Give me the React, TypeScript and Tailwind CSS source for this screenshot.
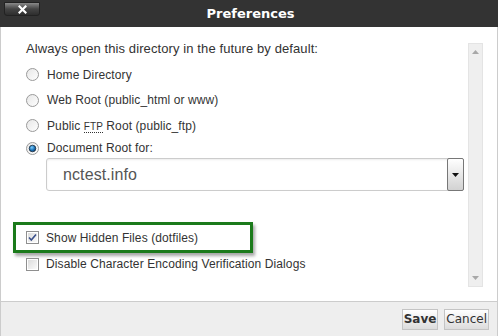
import React from 'react';

function Radio({ checked }: { checked?: boolean }) {
  return (
    <svg width="13" height="13" viewBox="0 0 13 13" className="shrink-0">
      <defs>
        <linearGradient id={checked ? 'rg1' : 'rg0'} x1="0" y1="0" x2="1" y2="1">
          <stop offset="0" stopColor="#e6e6e6" />
          <stop offset="1" stopColor="#ffffff" />
        </linearGradient>
        <radialGradient id="dot" cx="0.4" cy="0.35" r="0.7">
          <stop offset="0" stopColor="#7fd0ff" />
          <stop offset="0.6" stopColor="#1a6fb5" />
          <stop offset="1" stopColor="#0b3e6e" />
        </radialGradient>
      </defs>
      <circle cx="6.5" cy="6.5" r="6" fill={`url(#${checked ? 'rg1' : 'rg0'})`} stroke="#9a9a9a" strokeWidth="1" />
      {checked && <circle cx="6.5" cy="6.5" r="3.3" fill="url(#dot)" stroke="#1d2d3d" strokeWidth="0.8" />}
    </svg>
  );
}

function Check({ checked }: { checked?: boolean }) {
  return (
    <svg width="13" height="13" viewBox="0 0 13 13" className="shrink-0">
      <defs>
        <linearGradient id="cb" x1="0" y1="0" x2="1" y2="1">
          <stop offset="0" stopColor="#dcdcdc" />
          <stop offset="1" stopColor="#fafafa" />
        </linearGradient>
      </defs>
      <rect x="0.5" y="0.5" width="12" height="12" fill="#fff" stroke="#8f8f8f" />
      <rect x="2" y="2" width="9" height="9" fill="url(#cb)" />
      {checked && <path d="M3 6.5 L5.3 9 L10 3.5" fill="none" stroke="#3a4f8a" strokeWidth="1.6" />}
    </svg>
  );
}

export default function App() {
  return (
    <div className="w-[498px] h-[336px] flex flex-col bg-white text-[#333]" style={{ fontFamily: '"Liberation Sans", Arial, sans-serif' }}>
      {/* title bar */}
      <div className="h-[27px] bg-[#333333] flex items-start relative shrink-0">
        <div className="ml-[4px] mt-[2px] w-[36px] h-[14px] rounded-b-[3px] border border-[#222] bg-gradient-to-b from-[#8a8a8a] via-[#444] to-[#2e2e2e] flex items-center justify-center">
          <svg width="9" height="9" viewBox="0 0 9 9">
            <path d="M1.5 1.5 L7.5 7.5 M7.5 1.5 L1.5 7.5" stroke="#fff" strokeWidth="2.2" strokeLinecap="square" />
          </svg>
        </div>
        <div className="absolute inset-x-0 top-0 h-[27px] flex items-center justify-center text-white font-bold text-[13px] pl-[3px]" style={{ fontFamily: '"DejaVu Sans", Verdana, sans-serif' }}>
          Preferences
        </div>
      </div>

      {/* body */}
      <div className="flex-1 border-x border-[#cccccc] pl-[12px] pr-[14px] pt-[16px]">
        <div className="flex h-[244px]">
          <div className="flex-1 flex flex-col text-[12px] tracking-[0.1px]">
            <div className="ml-[13px] text-[13px] leading-[14px] -mt-[1px]">Always open this directory in the future by default:</div>
            <div className="mt-[6px] flex flex-col">
              <label className="h-[25px] flex items-center ml-[13px] gap-[8px]"><Radio /><span>Home Directory</span></label>
              <label className="h-[26px] flex items-center ml-[13px] gap-[8px]"><Radio /><span>Web Root (public_html or www)</span></label>
              <label className="h-[25px] flex items-center ml-[13px] gap-[8px]">
                <Radio />
                <span>Public <span className="text-[10px] border-b border-dotted border-[#333] leading-[11px]">FTP</span> Root (public_ftp)</span>
              </label>
              <label className="h-[20px] flex items-center ml-[13px] gap-[8px]"><Radio checked /><span>Document Root for:</span></label>
            </div>
            <div className="ml-[33px] mr-[4px] h-[33px] border border-[#cccccc] rounded-[3px] shadow-[inset_0_1px_2px_rgba(0,0,0,0.08)] flex items-center justify-between">
              <span className="pl-[16px] text-[16px] text-[#555]">nctest.info</span>
              <div className="h-[33px] w-[17px] -mr-[1px] border border-[#777] rounded-[2px] bg-gradient-to-b from-white to-[#d2d2d2] flex items-center justify-center">
                <svg width="7" height="4" viewBox="0 0 7 4"><path d="M0 0 H7 L3.5 4 Z" fill="#111" /></svg>
              </div>
            </div>
            <div className="mt-[31px] w-[240px] h-[31px] border-[3px] border-[#1b7a1b] shadow-[2px_3px_3px_rgba(0,0,0,0.35)] flex items-center pl-[10px] gap-[7px]">
              <Check checked />
              <span>Show Hidden Files (dotfiles)</span>
            </div>
            <label className="ml-[13px] h-[22px] flex items-center gap-[7px]">
              <Check />
              <span>Disable Character Encoding Verification Dialogs</span>
            </label>
          </div>
          <div className="w-[15px] bg-[#efefef] border border-[#e4e4e4] flex flex-col items-center justify-between py-[6px]">
            <svg width="7" height="4" viewBox="0 0 7 4"><path d="M0 4 H7 L3.5 0 Z" fill="#a8a8a8" /></svg>
            <svg width="7" height="4" viewBox="0 0 7 4"><path d="M0 0 H7 L3.5 4 Z" fill="#a8a8a8" /></svg>
          </div>
        </div>
      </div>

      {/* footer */}
      <div className="h-[35px] shrink-0 bg-[#eeeeee] border-t border-[#cccccc] border-x flex items-center justify-end gap-[6px] pr-[8px]" style={{ fontFamily: '"DejaVu Sans", Verdana, sans-serif' }}>
        <button className="h-[21px] px-[1px] border border-[#c4c4c4] bg-gradient-to-b from-white to-[#dcdcdc] text-[12px] font-bold text-[#333]">Save</button>
        <button className="h-[21px] px-[1px] border border-[#c4c4c4] bg-gradient-to-b from-white to-[#dcdcdc] text-[12px] text-[#333]">Cancel</button>
      </div>
    </div>
  );
}
